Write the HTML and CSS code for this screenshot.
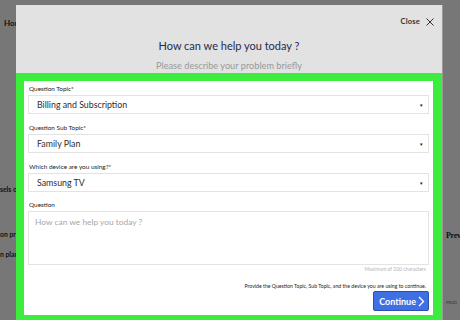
FILE: index.html
```html
<!DOCTYPE html>
<html lang="en">
<head>
  <meta charset="UTF-8" />
  <title>Contact support</title>
  <link rel="stylesheet" href="styles.css">
</head>
<body>
  <!-- page behind the dialog -->
  <div class="backdrop">
    <div class="side-left">
      <div class="crumb">Home</div>
      <div class="side-line first">sels of</div>
      <div class="side-line second">on pr</div>
      <div class="side-line third">n plan</div>
    </div>
    <div class="side-right">
      <div class="prev">Prev</div>
      <div class="product">PROD</div>
    </div>
  </div>

  <div class="modal">
    <div class="modal-head">
      <div class="close-row">
        <span class="close">Close</span>
        <svg class="close-x" width="8" height="8" viewBox="0 0 8 8">
          <path d="M0.5 0.5 L7.5 7.5 M7.5 0.5 L0.5 7.5" stroke="#333" stroke-width="1" fill="none"/>
        </svg>
      </div>
      <h1 class="title">How can we help you today ?</h1>
      <p class="subtitle">Please describe your problem briefly</p>
    </div>

    <form class="modal-body">
      <label class="field-label">Question Topic*</label>
      <div class="select">
        <span>Billing and Subscription</span>
        <span class="caret">&#9662;</span>
      </div>

      <label class="field-label">Question Sub Topic*</label>
      <div class="select">
        <span>Family Plan</span>
        <span class="caret">&#9662;</span>
      </div>

      <label class="field-label">Which device are you using?*</label>
      <div class="select">
        <span>Samsung TV</span>
        <span class="caret">&#9662;</span>
      </div>

      <label class="field-label question">Question</label>
      <div class="textarea">How can we help you today ?</div>
      <div class="hint">Maximum of 200 characters</div>

      <div class="note">Provide the Question Topic, Sub Topic, and the device you are using to continue.</div>
      <div class="actions">
        <button type="button" class="continue">
          <span>Continue</span>
          <svg width="7" height="11" viewBox="0 0 7 11">
            <path d="M1 1 L5.5 5.5 L1 10" stroke="#fff" stroke-width="1.4" fill="none"/>
          </svg>
        </button>
      </div>
    </form>
  </div>
</body>
</html>
```

FILE: styles.css
```css
:root {
  --backdrop: #777777;
  --head-bg: #e2e2e2;
  --green: #3ded3d;
  --border: #e3e3e3;
  --text: #333;
  --navy: #1f2b4d;
  --blue: #3f6fe4;
}

html, body {
  margin: 0;
  padding: 0;
}

body {
  width: 460px;
  height: 320px;
  overflow: hidden;
  background: var(--backdrop);
  font-family: Lato, "Open Sans", sans-serif;
  color: var(--text);
  position: relative;
}

/* page under the overlay */
.backdrop {
  display: flex;
  justify-content: space-between;
  height: 320px;
}

.side-left {
  padding-left: 4px;
  font-size: 6.8px;
  color: #111;
}

.crumb {
  margin-top: 18px;
  font-weight: 700;
  font-size: 8px;
}

.side-line {
  font-weight: 700;
  margin-left: -4px;
}

.side-line.first { margin-top: 157px; }
.side-line.second { margin-top: 37px; }
.side-line.third { margin-top: 12px; }

.side-right {
  width: 17px;
  overflow: hidden;
  font-family: "Liberation Serif", serif;
  color: #111;
}

.prev {
  margin-top: 231px;
  margin-left: 3px;
  font-size: 8px;
  font-weight: 700;
  letter-spacing: -0.3px;
}

.product {
  margin-top: 60px;
  margin-left: 3px;
  font-family: Lato, sans-serif;
  font-size: 4px;
  color: #333;
}

/* dialog */
.modal {
  position: absolute;
  left: 16px;
  top: 5px;
  width: 426px;
  height: 330px;
  background: var(--head-bg);
  box-shadow: 1px 0 0 #9a9a9a;
}

.modal-head {
  height: 68px;
  overflow: hidden;
  text-align: center;
}

.close-row {
  display: flex;
  justify-content: flex-end;
  align-items: center;
  gap: 6px;
  padding: 12px 8px 0 0;
  height: 9px;
}

.close {
  font-size: 7.5px;
  font-weight: 700;
  color: #3b3030;
  letter-spacing: 0.2px;
}

.title {
  margin: 13px 0 0;
  font-size: 11px;
  font-weight: 400;
  color: var(--navy);
  line-height: 14px;
}

.subtitle {
  margin: 7px 0 0;
  font-size: 9.2px;
  color: #9a9a9a;
  line-height: 12px;
}

.modal-body {
  margin: 0;
  height: 230px;
  border: 8px solid var(--green);
  border-right-width: 9px;
  background: #fff;
  padding: 4px 4px 0;
  display: flex;
  flex-direction: column;
}

.field-label {
  font-size: 6.4px;
  line-height: 8px;
  color: #222;
  padding-left: 1px;
}

.select {
  margin-top: 2px;
  margin-bottom: 10px;
  height: 17px;
  border: 1px solid var(--border);
  display: flex;
  align-items: center;
  justify-content: space-between;
  padding: 0 5px 0 8px;
  font-size: 8.8px;
  color: #2d2d2d;
}

.caret {
  font-size: 5px;
  color: #111;
}

.field-label.question {
  margin-top: -1px;
}

.textarea {
  margin-top: 2px;
  height: 42px;
  border: 1px solid var(--border);
  padding: 5px 6px;
  font-size: 8.4px;
  color: #a6a6a6;
}

.hint {
  text-align: right;
  font-size: 5px;
  color: #b5b5b5;
  margin-top: 1px;
  padding-right: 3px;
}

.note {
  text-align: right;
  font-size: 5.2px;
  color: #222;
  margin-top: 11px;
  padding-right: 3px;
}

.actions {
  display: flex;
  justify-content: flex-end;
  margin-top: 2px;
}

.continue {
  display: flex;
  align-items: center;
  gap: 2px;
  height: 20px;
  padding: 0 3px 0 5px;
  background: var(--blue);
  border: 1px solid #2a4fb0;
  border-radius: 2px;
  color: #fff;
  font-family: Lato, sans-serif;
  font-size: 9px;
  font-weight: 700;
}
```
